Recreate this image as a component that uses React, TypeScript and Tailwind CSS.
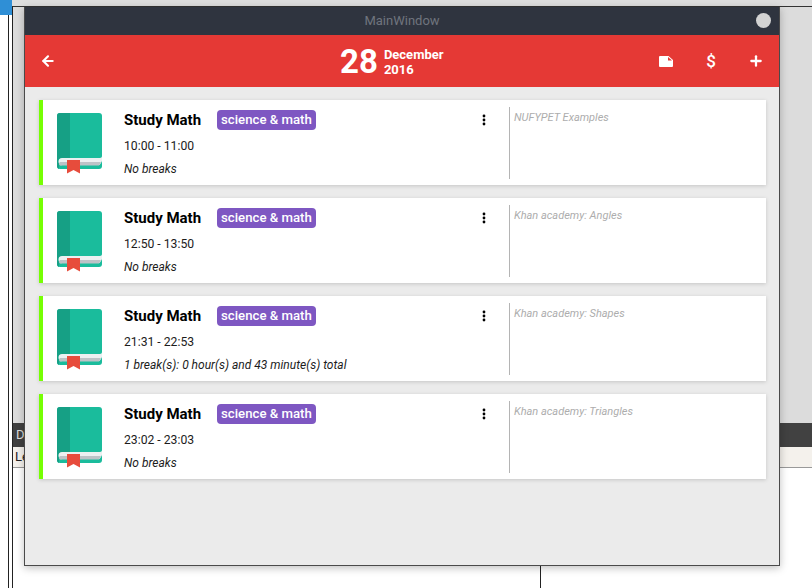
import { ArrowLeft, Plus } from 'lucide-react'

type Session = { time: string; breaks: string; note: string }

const sessions: Session[] = [
  { time: '10:00 - 11:00', breaks: 'No breaks', note: 'NUFYPET Examples' },
  { time: '12:50 - 13:50', breaks: 'No breaks', note: 'Khan academy: Angles' },
  { time: '21:31 - 22:53', breaks: '1 break(s): 0 hour(s) and 43 minute(s) total', note: 'Khan academy: Shapes' },
  { time: '23:02 - 23:03', breaks: 'No breaks', note: 'Khan academy: Triangles' },
]

function BookIcon() {
  return (
    <svg width="46" height="61" viewBox="0 0 46 61" className="shrink-0">
      <path d="M3 0h39a3 3 0 0 1 3 3v50a3 3 0 0 1-3 3H3a3 3 0 0 1-3-3V3a3 3 0 0 1 3-3z" fill="#1abc9c" />
      <path d="M3 0h10v46H2v10a3 3 0 0 1-2-3V3a3 3 0 0 1 3-3z" fill="#16a085" />
      <path d="M5 45h38c1 0 2-1 2-2v5c-1 2-2 4-3 4H5a3.500 3.500 0 0 1 0-7z" fill="#ecf0f1" />
      <path d="M3 49h41l-2 3.500H5a2 2 0 0 1-2-3.500z" fill="#bdc3c7" />
      <path d="M10 47h13v13.500l-6.500-3.500-6.500 3.500z" fill="#e74c3c" />
    </svg>
  )
}

function SessionCard({ session }: { session: Session }) {
  return (
    <div className="flex h-[85px] border-l-4 border-[#76ff03] bg-white shadow-[0_1px_4px_rgba(0,0,0,0.16)]">
      <div className="ml-[14px] mt-[13px]">
        <BookIcon />
      </div>
      <div className="ml-[21px] w-[386px] shrink-0 pt-[10px]">
        <div className="flex h-[20px] items-center">
          <span className="text-[15px] font-bold leading-[20px] text-black">Study Math</span>
          <span className="ml-4 rounded-[4px] bg-[#7e57c2] px-1 py-px text-[13.2px] font-medium leading-[18px] text-white">
            science &amp; math
          </span>
          <svg width="4" height="12" viewBox="0 0 4 12" className="ml-auto mr-[24px]">
            <circle cx="2" cy="2" r="1.400" fill="#000" />
            <circle cx="2" cy="6" r="1.400" fill="#000" />
            <circle cx="2" cy="10" r="1.400" fill="#000" />
          </svg>
        </div>
        <p className="mt-[6px] text-[12.2px] leading-[20px] text-[#1c1c1c]">{session.time}</p>
        <p className="mt-[3px] text-[12px] italic leading-[20px] text-[#1c1c1c]">{session.breaks}</p>
      </div>
      <div className="mb-[6px] ml-[-1px] mt-[7px] w-px bg-[#b4b4b4]" />
      <p className="ml-1 mt-[11px] text-[11px] italic leading-[14px] text-[#adadad]">{session.note}</p>
    </div>
  )
}

function Backdrop() {
  return (
    <div className="flex h-[588px] w-[812px] flex-col bg-white">
      <div className="h-[6px] shrink-0 bg-[#dedede]" />
      <div className="h-px shrink-0 bg-[#333]" />
      <div className="h-[416px] shrink-0 bg-[#dcdcdc]" />
      <div className="flex h-[24px] shrink-0 items-center bg-[#414141] pl-[16px] text-[13px] text-[#ddd]">D</div>
      <div className="flex h-[21px] shrink-0 items-center border-b border-[#999] bg-[#f4f1ec] pl-[15px] text-[13px] text-[#222]">
        Le
      </div>
    </div>
  )
}

export default function App() {
  return (
    <div className="relative h-[588px] w-[812px] overflow-hidden font-['Roboto',sans-serif]">
      <Backdrop />
      {/* pieces of other windows behind the app */}
      <div className="absolute left-0 top-0 h-[15px] w-[12px] bg-[#2f8fd6]" />
      <div className="absolute left-0 top-[15px] h-[573px] w-[8px] bg-white" />
      <div className="absolute left-[8px] top-[15px] h-[573px] w-px bg-[#222]" />
      <div className="absolute left-[9px] top-[15px] h-[573px] w-[3px] bg-white" />
      <div className="absolute left-[12px] top-[6px] h-[582px] w-px bg-[#222]" />
      <div className="absolute left-[540px] top-[566px] h-[22px] w-px bg-[#222]" />

      <div className="absolute left-[24px] top-[7px] flex h-[559px] w-[756px] flex-col border border-t-0 border-[#4a4a4a] bg-[#ebebeb] shadow-[0_2px_8px_rgba(0,0,0,0.25)]">
        <div className="relative flex h-[28px] shrink-0 items-center justify-center bg-[#2f343f]">
          <span className="text-[13px] text-[#6f747e]">MainWindow</span>
          <div className="absolute right-[8px] top-[6px] h-[15px] w-[15px] rounded-full bg-[#d3d3d3]" />
        </div>
        <div className="flex h-[52px] shrink-0 items-center bg-[#e53935] text-white">
          <ArrowLeft size={16} strokeWidth={3.2} className="ml-[15px]" />
          <div className="ml-[284px] flex items-center">
            <span className="text-[33px] font-bold leading-none">28</span>
            <div className="ml-[6px] pt-[2px] text-[13px] font-bold leading-[15px]">
              <div>December</div>
              <div>2016</div>
            </div>
          </div>
          <svg width="14" height="11" viewBox="0 0 14 11" className="ml-auto">
            <path d="M1 0h8.500L14 4v6a1 1 0 0 1-1 1H1a1 1 0 0 1-1-1V1a1 1 0 0 1 1-1z" fill="#fff" />
            <path d="M9 1v3.500h4z" fill="#e53935" />
          </svg>
          <span className="ml-[33px] w-[10px] text-center text-[17px] font-medium leading-none">$</span>
          <Plus size={16} strokeWidth={3.4} className="ml-[32px] mr-[15px]" />
        </div>
        <div className="flex flex-col gap-[13px] pl-[14px] pr-[13px] pt-[13px]">
          {sessions.map((s) => (
            <SessionCard key={s.time} session={s} />
          ))}
        </div>
      </div>
    </div>
  )
}
